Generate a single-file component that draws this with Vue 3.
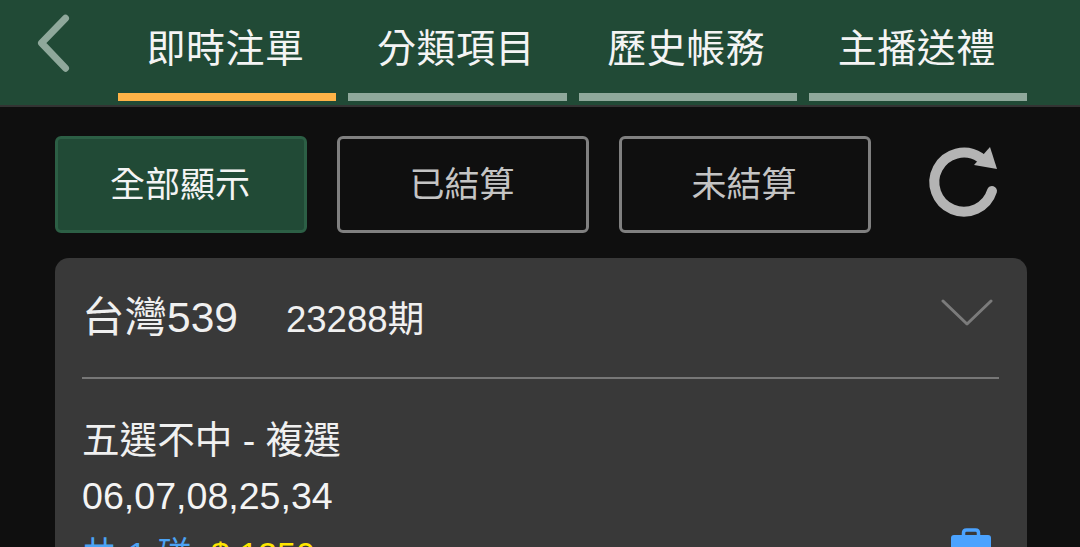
<script setup>
const tabs = [
  { label: '即時注單', active: true },
  { label: '分類項目' },
  { label: '歷史帳務' },
  { label: '主播送禮' },
]
const filters = [
  { label: '全部顯示', active: true },
  { label: '已結算' },
  { label: '未結算' },
]
</script>

<template>
  <div class="page">
    <header class="topbar">
      <svg class="back" width="34" height="60" viewBox="0 0 34 60">
        <path d="M29.5 5.2 L5.5 30 L29.5 55.2" fill="none" stroke="#8fa89b" stroke-width="7" stroke-linecap="round" stroke-linejoin="round" />
      </svg>
      <nav class="tabs">
        <div v-for="t in tabs" :key="t.label" class="tab" :class="{ on: t.active }">
          <span class="tab-text">{{ t.label }}</span>
          <i class="tab-bar"></i>
        </div>
      </nav>
    </header>

    <main class="content">
      <div class="filters">
        <button v-for="f in filters" :key="f.label" class="filter" :class="{ on: f.active }"><span class="filter-text">{{ f.label }}</span></button>
        <svg class="refresh" width="76" height="80" viewBox="0 0 76 80">
          <path d="M67 49 A29.5 29.5 0 1 1 55 15.5" fill="none" stroke="#b4b4b4" stroke-width="10" stroke-linecap="round" />
          <path d="M65 5 L72 27 L49 23 Z" fill="#b4b4b4" />
        </svg>
      </div>

      <section class="card">
        <div class="card-head">
          <div class="title">
            <span class="game">台灣539</span>
            <span class="period">23288期</span>
          </div>
          <svg class="chev" width="52" height="32" viewBox="0 0 52 32">
            <path d="M2 2 L26 25 L50 2" fill="none" stroke="#7b7b7b" stroke-width="3" stroke-linecap="round" stroke-linejoin="round" />
          </svg>
        </div>
        <div class="body">
          <div class="kind">五選不中 - 複選</div>
          <div class="nums">06,07,08,25,34</div>
          <div class="foot">
            <span class="total"><span class="count">共 1 碰</span><span class="money">$ 1250</span></span>
            <svg class="bag" width="42" height="36" viewBox="0 0 42 36">
              <path d="M13.5 8 V5 Q13.5 2 16.5 2 H25.5 Q28.5 2 28.5 5 V8" fill="none" stroke="#4ba3ff" stroke-width="3.5" />
              <rect x="1" y="7" width="40" height="29" rx="3" fill="#4ba3ff" />
            </svg>
          </div>
        </div>
      </section>
    </main>
  </div>
</template>

<style>
html, body { margin: 0; background: #0f0f0f; overflow: hidden; }
</style>

<style scoped>
.page {
  width: 1080px;
  height: 547px;
  overflow: hidden;
  background: #0f0f0f;
  font-family: "Liberation Sans", "Noto Sans CJK TC", sans-serif;
  color: #fff;
}
.topbar {
  height: 105px;
  background: #214a36;
  border-bottom: 2px solid #333;
  display: flex;
  position: relative;
}
.back { position: absolute; left: 36px; top: 13px; }
.tabs {
  display: flex;
  gap: 12.2px;
  margin-left: 118px;
}
.tab {
  width: 218.2px;
  display: flex;
  flex-direction: column;
  align-items: center;
}
.tab-text {
  height: 93px;
  line-height: 97px;
  font-size: 39px;
  color: #f4f4f4;
  letter-spacing: 0.5px;
  margin-left: -3px;
}
.tab-bar { display: block; width: 100%; height: 8px; background: #8fa89b; flex: none; }
.tab.on .tab-bar { background: #ffb347; }
.content { padding: 29px 0 0 55px; }
.filters { display: flex; gap: 30px; align-items: flex-start; }
.filter {
  width: 252px;
  height: 97px;
  box-sizing: border-box;
  border: 3px solid #808080;
  border-radius: 6px;
  background: transparent;
  color: #c4c4c4;
  font: inherit;
  font-size: 35px;
  padding: 0;
}
.filter + .filter { margin-left: 0; }
.filter-text { position: relative; top: -3px; left: -1px; }
.filter.on {
  background: #214a36;
  border-color: #2c5f45;
  color: #f4f4f4;
}
.refresh { margin: 6px 0 0 24px; flex: none; }
.card {
  margin-top: 25px;
  width: 972px;
  height: 400px;
  background: #393939;
  border-radius: 14px;
  padding: 0 28px 0 27px;
  box-sizing: border-box;
}
.card-head {
  height: 119px;
  border-bottom: 2px solid #777;
  display: flex;
  align-items: flex-start;
  justify-content: space-between;
  position: relative;
}
.title { display: flex; align-items: baseline; gap: 48px; padding-top: 32px; }
.game { font-size: 42.5px; line-height: 56px; color: #f0f0f0; }
.period { font-size: 36.6px; color: #f0f0f0; }
.chev { position: absolute; right: 6px; top: 41px; }
.body { padding-top: 36px; }
.kind { font-size: 37.6px; line-height: 50px; color: #f0f0f0; }
.nums { font-size: 37.6px; line-height: 50px; margin-top: 6px; color: #f4f4f4; }
.foot { display: flex; justify-content: space-between; margin-top: 6px; }
.total { font-size: 34px; }
.count { color: #4ba3f5; margin-right: 18px; letter-spacing: 1px; }
.money { color: #ffe600; }
.bag { margin-right: 7px; margin-top: 1px; }
</style>
